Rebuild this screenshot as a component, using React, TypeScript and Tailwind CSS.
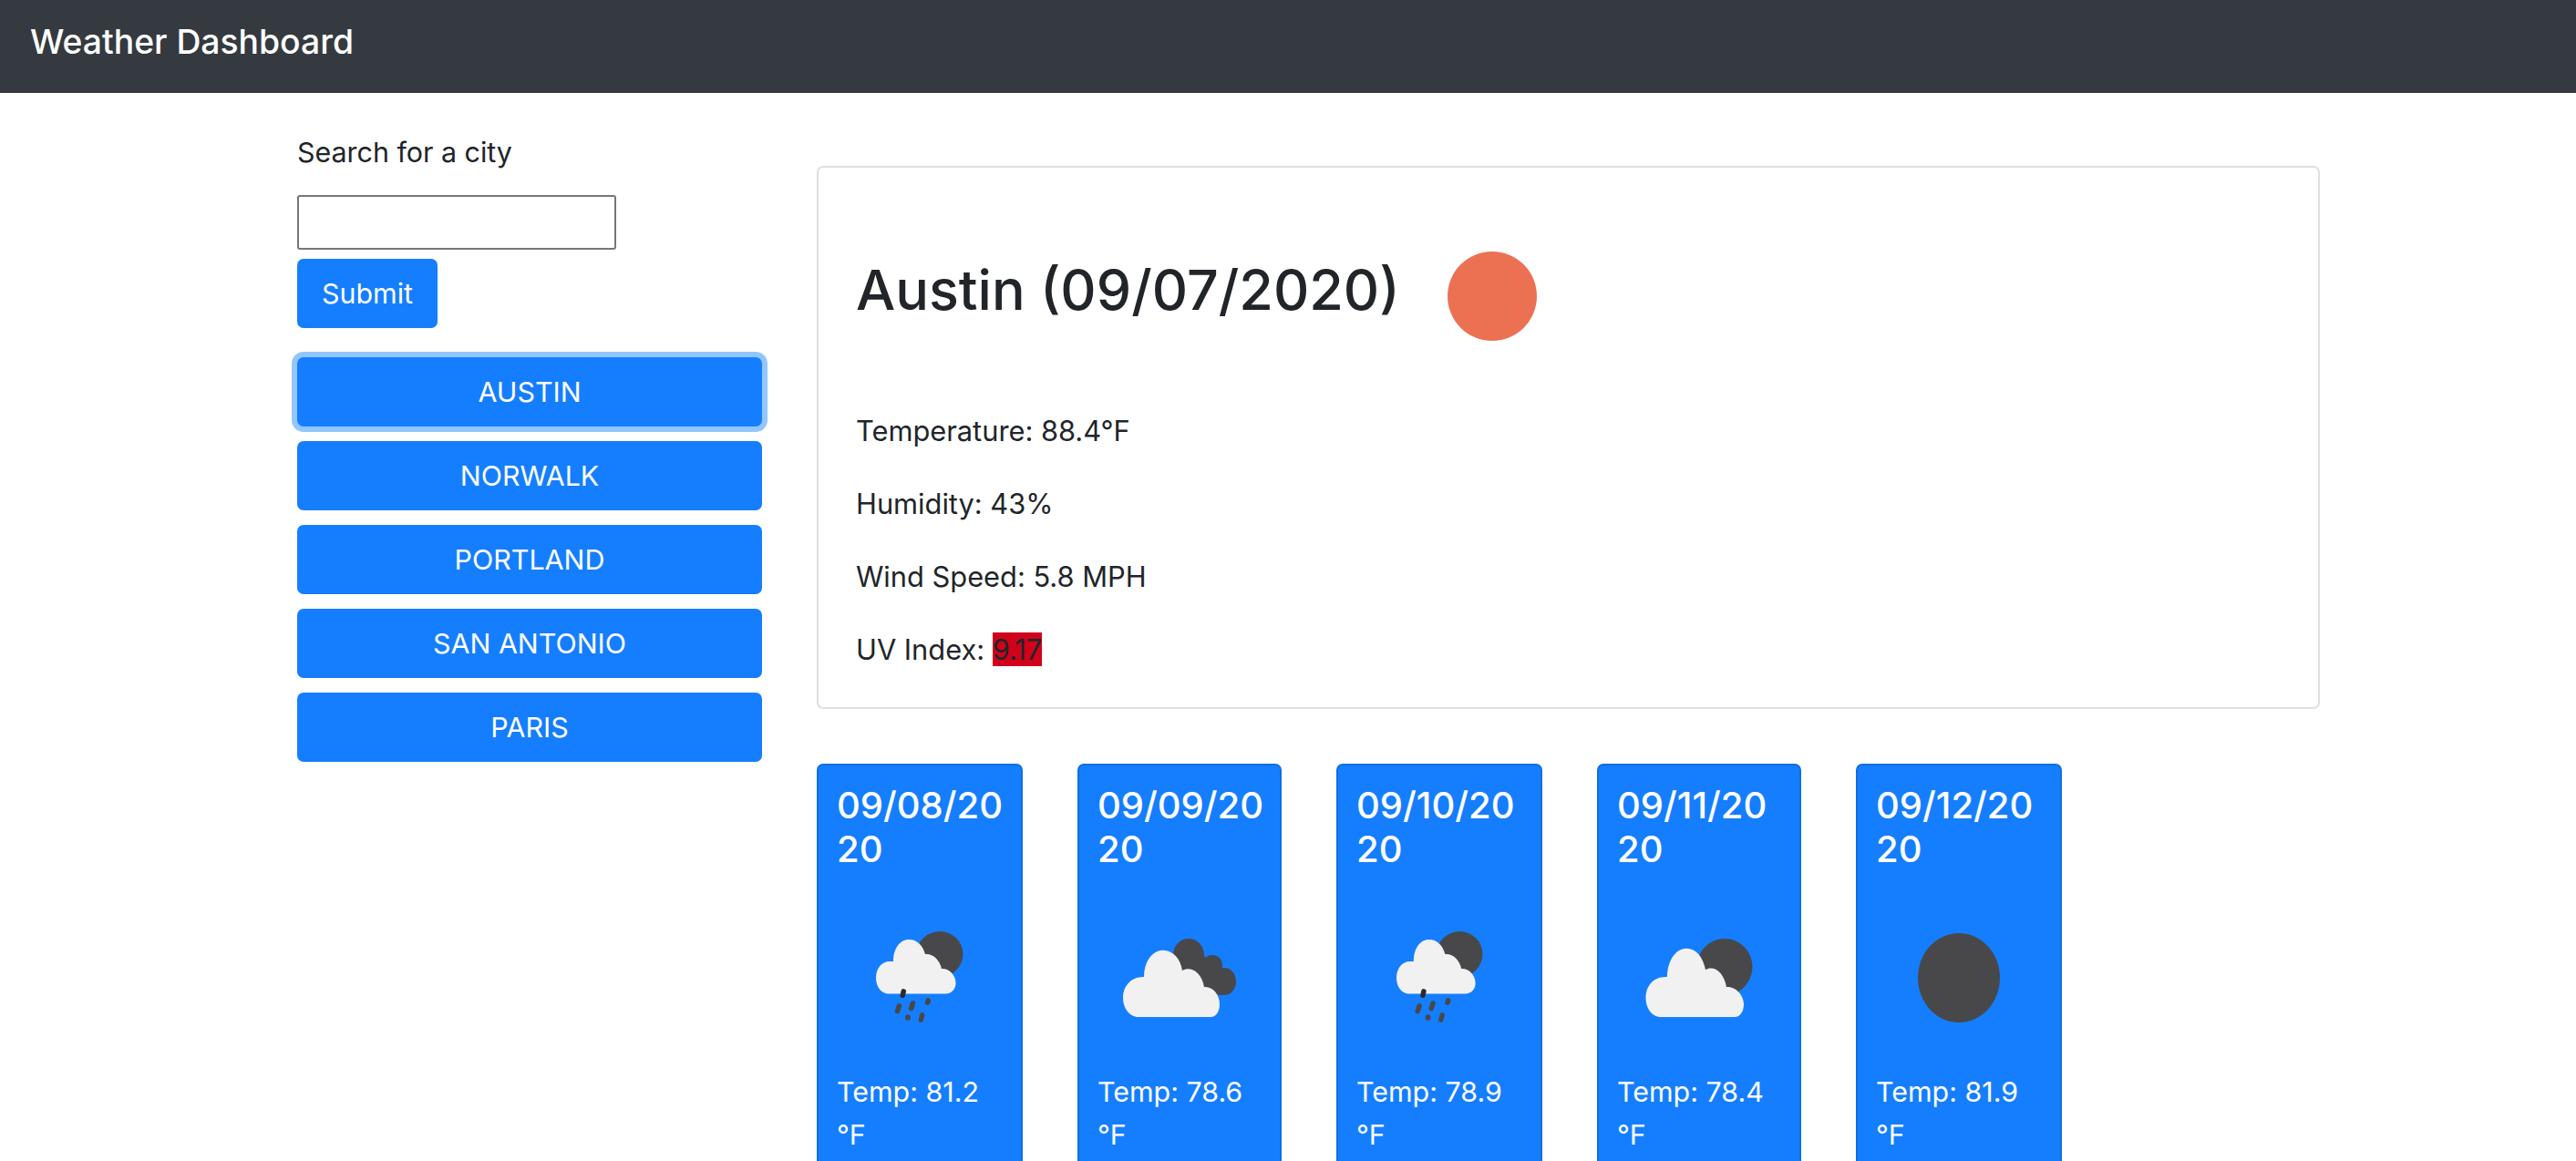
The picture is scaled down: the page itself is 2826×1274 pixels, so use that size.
const sans = "font-['Inter','Liberation_Sans',sans-serif]";

const cities = ["AUSTIN", "NORWALK", "PORTLAND", "SAN ANTONIO", "PARIS"];

function RainIcon({ className }: { className: string }) {
  return (
    <svg viewBox="0 0 96 100" preserveAspectRatio="none" className={className}>
      <ellipse cx="70" cy="25" rx="25.500" ry="25" fill="#48484a" />
      <path d="M14 68.500C5.500 68.500 0 60.500 0 51C0 41 6 33 15 33L19 33C19 19 26 9 36 9C45 9 51 15 54 25C62 24 70 31 72 41C78 40 87 46 87.500 56C88 63 83 68.500 76 68.500Z" fill="#f1f1f1" />
      <g fill="#48484a">
        <rect x="27" y="63" width="5.500" height="10" rx="2.750" transform="rotate(12 29.500 68)" fill="#2b2b2d" />
        <rect x="21.700" y="79" width="5.500" height="11.500" rx="2.750" transform="rotate(18 24.500 84.700)" />
        <rect x="36.700" y="76" width="5.500" height="11.500" rx="2.750" transform="rotate(18 39.500 82)" />
        <rect x="54.200" y="73" width="5.500" height="8" rx="2.750" transform="rotate(18 57 77)" />
        <ellipse cx="35" cy="94.500" rx="3" ry="3.200" />
        <rect x="47.200" y="89" width="5.500" height="11" rx="2.750" transform="rotate(15 50 94.700)" />
      </g>
    </svg>
  );
}

function CloudsIcon({ className }: { className: string }) {
  return (
    <svg viewBox="0 0 124 86" preserveAspectRatio="none" className={className}>
      <g fill="#48484a">
        <ellipse cx="72" cy="18" rx="17" ry="18" />
        <ellipse cx="98" cy="29" rx="11" ry="11" />
        <ellipse cx="111.500" cy="47" rx="12.500" ry="15" />
        <path d="M60 20L85 15L100 30L110 62L70 60Z" />
      </g>
      <path d="M17 86C7 86 0 76 0 65C0 53 8 42 22 42L23 42C23 25 32 12.700 44 12.700C55 12.700 63 22 65 35C74 30 86 36 89 53C99 52 106 62 106 72C106 80 102 86 96 86Z" fill="#f1f1f1" />
    </svg>
  );
}

function MoonCloudIcon({ className }: { className: string }) {
  return (
    <svg viewBox="0 0 118 86" preserveAspectRatio="none" className={className}>
      <ellipse cx="87" cy="31" rx="30.500" ry="31" fill="#48484a" />
      <path d="M17 86C7 86 0.500 76 0.500 65C0.500 53 8 42 22 42L24 42C24 25 33 10.700 45 10.700C56 10.700 63 20 66 34C75 29 86 36 89 53C99 52 108 62 108 72C108 80 104 86 98 86Z" fill="#f1f1f1" />
    </svg>
  );
}

function MoonIcon({ className }: { className: string }) {
  return (
    <svg viewBox="0 0 90 98" preserveAspectRatio="none" className={className}>
      <ellipse cx="45" cy="49" rx="45" ry="49" fill="#48484a" />
    </svg>
  );
}

const forecast = [
  { date: "09/08/2020", temp: "81.2", width: "w-[226px]", icon: <RainIcon className="w-[96px] h-[100px]" />, iconBox: "pt-[1px]" },
  { date: "09/09/2020", temp: "78.6", width: "w-[224px]", icon: <CloudsIcon className="w-[124px] h-[86px]" />, iconBox: "pt-[9px]" },
  { date: "09/10/2020", temp: "78.9", width: "w-[226px]", icon: <RainIcon className="w-[95px] h-[100px]" />, iconBox: "pt-[1px]" },
  { date: "09/11/2020", temp: "78.4", width: "w-[224px]", icon: <MoonCloudIcon className="w-[118px] h-[86px]" />, iconBox: "pt-[9px]" },
  { date: "09/12/2020", temp: "81.9", width: "w-[226px]", icon: <MoonIcon className="w-[90px] h-[98px]" />, iconBox: "pt-[3px]" },
];

export default function App() {
  return (
    <div className={`${sans} h-screen overflow-hidden bg-white text-[#212529] text-[30.4px] leading-[45px]`}>
      <nav className="h-[102px] bg-[#343a40] pl-[33px] pt-[20px]">
        <span className="text-[37.3px] leading-[52px] font-medium text-white">Weather Dashboard</span>
      </nav>

      <div className="flex pl-[326px]">
        <aside className="w-[510px] shrink-0 pt-[45px]">
          <label className="block leading-[40px]">Search for a city</label>
          <input className="block mt-[27px] w-[350px] h-[60px] border-2 border-[#767676] rounded-[3px] bg-white" />
          <button className="block mt-[10px] w-[154px] h-[76px] rounded-[7px] bg-[#157eff] text-white">Submit</button>
          <div className="mt-[32px] flex flex-col gap-4">
            {cities.map((city, i) => (
              <button
                key={city}
                className={`h-[76px] rounded-[7px] bg-[#157eff] text-white ${i === 0 ? "ring-[6px] ring-[#91c6ff]" : ""}`}
              >
                {city}
              </button>
            ))}
          </div>
        </aside>

        <main className="ml-[60px] w-[1649px] pt-[80px]">
          <section className="h-[596px] border-2 border-[#dfdfdf] rounded-[7px] pl-[41px]">
            <div className="flex items-start pt-[92px]">
              <h1 className="mt-[4px] text-[61px] leading-[76px] font-medium">Austin (09/07/2020)</h1>
              <div className="ml-[52px] w-[98px] h-[98px] rounded-full bg-[#ec7153]" />
            </div>
            <div className="mt-[76px] flex flex-col gap-[35px] text-[30.8px]">
              <p>Temperature: 88.4°F</p>
              <p>Humidity: 43%</p>
              <p>Wind Speed: 5.8 MPH</p>
              <p>
                UV Index: <span className="bg-[#d0021b]">9.17</span>
              </p>
            </div>
          </section>

          <div className="mt-[60px] flex gap-[60px]">
            {forecast.map((day) => (
              <div key={day.date} className={`${day.width} h-[600px] shrink-0 border-2 border-[#0f6fdf] rounded-[7px] bg-[#157eff] text-white px-[20px] pt-[20px]`}>
                <h5 className="text-[40px] leading-[48px] font-medium whitespace-nowrap">
                  {day.date.slice(0, 8)}
                  <br />
                  {day.date.slice(8)}
                </h5>
                <div className={`h-[130px] mt-[65px] flex justify-center ${day.iconBox}`}>{day.icon}</div>
                <p className="mt-[24px] leading-[47px]">Temp: {day.temp} °F</p>
              </div>
            ))}
          </div>
        </main>
      </div>
    </div>
  );
}
